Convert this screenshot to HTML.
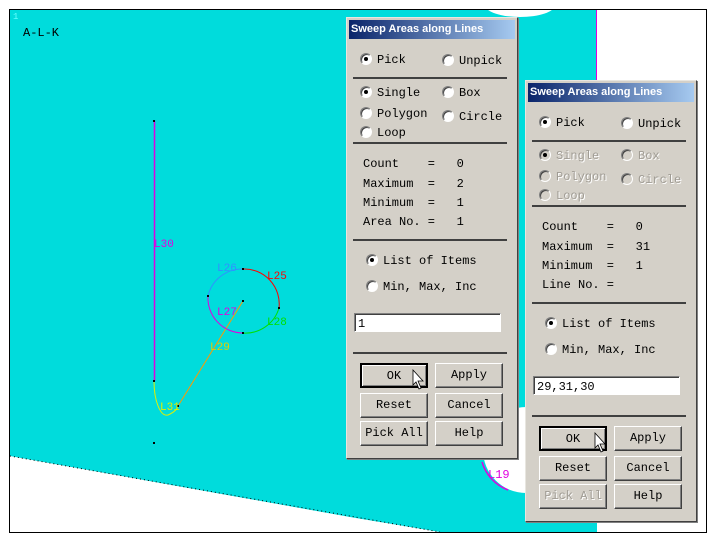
<!DOCTYPE html>
<html><head><style>
*{margin:0;padding:0;box-sizing:border-box}
body{width:720px;height:546px;background:#fff;position:relative;overflow:hidden;font-family:"Liberation Mono",monospace;font-size:12px;color:#000}
.dlg{position:absolute;width:172px;height:442px;background:#d4d0c8;border:1px solid;border-color:#e8e6e0 #404040 #404040 #e8e6e0;box-shadow:1px 1px 0 #808080}
.tb{position:absolute;left:2px;top:2px;right:2px;height:19px;background:linear-gradient(90deg,#0a246a,#a6caf0);color:#fff;font:bold 11px "Liberation Sans",sans-serif;padding:3px 0 0 2px}
.a{position:absolute;white-space:pre;line-height:12px}
.r{position:absolute;width:12px;height:12px;border-radius:50%;background:#fff;border:1px solid;border-color:#808080 #fff #fff #808080;box-shadow:inset 1px 1px 0 #404040}
.r.on::after{content:"";position:absolute;left:3px;top:3px;width:4px;height:4px;border-radius:50%;background:#000}
.dis{color:#a09c94;text-shadow:1px 1px 0 #fff}
.r.dis{background:#d4d0c8}
.sep{position:absolute;left:6px;width:154px;height:2px;background:#404040}
.in{position:absolute;left:7px;width:147px;height:19px;background:#fff;border:1px solid;border-color:#808080 #fff #fff #808080;box-shadow:inset 1px 1px 0 #404040;padding:3px 0 0 3px}
.b{position:absolute;width:68px;height:25px;border:1px solid;border-color:#fff #404040 #404040 #fff;box-shadow:inset -1px -1px 0 #808080;text-align:center;line-height:22px}
.b.def{border:2px solid #000;box-shadow:inset 1px 1px 0 #fff,inset -1px -1px 0 #808080}
</style></head><body>
<svg width="720" height="546" style="position:absolute;left:0;top:0">
<rect x="9.5" y="9.5" width="697" height="523" fill="#00dcdc" stroke="#000"/>
<rect x="597" y="10" width="109" height="522" fill="#fff"/>
<line x1="596.5" y1="10" x2="596.5" y2="100" stroke="#e000e0"/>
<polygon points="10,456 350,517 440,532 10,532" fill="#fff"/>
<line x1="10" y1="456" x2="440" y2="532" stroke="#000" stroke-dasharray="1,3"/>
<ellipse cx="520" cy="5" rx="35" ry="12" fill="#fff"/>
<circle cx="526" cy="450" r="43" fill="#fff"/>
<path d="M482,462 A43,43 0 0 0 508,490" fill="none" stroke="#e000e0" stroke-width="1.5"/>
<text x="488" y="478" fill="#e000e0" font-family="Liberation Mono" font-size="12">L19</text>
<rect x="9.5" y="9.5" width="697" height="523" fill="none" stroke="#000"/>
<text x="13" y="19" fill="#6ff" font-size="9">1</text>
<text x="23" y="36" font-family="Liberation Mono" font-size="12">A-L-K</text>
<line x1="154.5" y1="121" x2="154.5" y2="381" stroke="#e000e0" stroke-width="1.5"/>
<path d="M154,381 C154,400 160,417 168,415 C175,412 178,408 178,405" fill="none" stroke="#e0f000"/>
<line x1="178" y1="406" x2="243" y2="301" stroke="#ff9900"/>
<path d="M243,269 A35,35 0 0 1 279,308" fill="none" stroke="#ff0000"/>
<path d="M279,308 A35,35 0 0 1 243,333" fill="none" stroke="#00e000"/>
<path d="M243,333 A35,35 0 0 1 208,296" fill="none" stroke="#e000e0"/>
<path d="M208,296 A35,35 0 0 1 243,269" fill="none" stroke="#3090ff"/>
<g fill="#000"><rect x="153" y="120" width="2" height="2"/><rect x="153" y="380" width="2" height="2"/><rect x="153" y="442" width="2" height="2"/><rect x="177" y="405" width="2" height="2"/><rect x="242" y="300" width="2" height="2"/><rect x="242" y="268" width="2" height="2"/><rect x="278" y="307" width="2" height="2"/><rect x="242" y="332" width="2" height="2"/><rect x="207" y="295" width="2" height="2"/></g>
<g font-family="Liberation Mono" font-size="11">
<text x="154" y="247" fill="#e000e0">L30</text>
<text x="217" y="271" fill="#3090ff">L26</text>
<text x="267" y="279" fill="#ff0000">L25</text>
<text x="217" y="315" fill="#e000e0">L27</text>
<text x="267" y="325" fill="#00e000">L28</text>
<text x="210" y="350" fill="#e0d000">L29</text>
<text x="160" y="410" fill="#e0f000">L31</text>
</g>
</svg>

<div class="dlg" style="left:346px;top:17px">
<div class="tb">Sweep Areas along Lines</div>
<div class="r on" style="left:13px;top:35px"></div><div class="a" style="left:30px;top:36px">Pick</div>
<div class="r" style="left:95px;top:36px"></div><div class="a" style="left:112px;top:37px">Unpick</div>
<div class="sep" style="top:59px"></div>
<div class="r on" style="left:13px;top:68px"></div><div class="a" style="left:30px;top:69px">Single</div>
<div class="r" style="left:95px;top:68px"></div><div class="a" style="left:112px;top:69px">Box</div>
<div class="r" style="left:13px;top:89px"></div><div class="a" style="left:30px;top:90px">Polygon</div>
<div class="r" style="left:95px;top:92px"></div><div class="a" style="left:112px;top:93px">Circle</div>
<div class="r" style="left:13px;top:108px"></div><div class="a" style="left:30px;top:109px">Loop</div>
<div class="sep" style="top:124px"></div>
<div class="a" style="left:16px;top:140px">Count    =   0</div>
<div class="a" style="left:16px;top:160px">Maximum  =   2</div>
<div class="a" style="left:16px;top:179px">Minimum  =   1</div>
<div class="a" style="left:16px;top:198px">Area No. =   1</div>
<div class="sep" style="top:221px"></div>
<div class="r on" style="left:19px;top:236px"></div><div class="a" style="left:36px;top:237px">List of Items</div>
<div class="r" style="left:19px;top:262px"></div><div class="a" style="left:36px;top:263px">Min, Max, Inc</div>
<div class="in" style="top:295px">1</div>
<div class="sep" style="top:334px"></div>
<div class="b def" style="left:13px;top:345px">OK</div>
<div class="b" style="left:88px;top:345px">Apply</div>
<div class="b" style="left:13px;top:375px">Reset</div>
<div class="b" style="left:88px;top:375px">Cancel</div>
<div class="b" style="left:13px;top:403px">Pick All</div>
<div class="b" style="left:88px;top:403px">Help</div>
</div>

<div class="dlg" style="left:525px;top:80px">
<div class="tb">Sweep Areas along Lines</div>
<div class="r on" style="left:13px;top:35px"></div><div class="a" style="left:30px;top:36px">Pick</div>
<div class="r" style="left:95px;top:36px"></div><div class="a" style="left:112px;top:37px">Unpick</div>
<div class="sep" style="top:59px"></div>
<div class="r on dis" style="left:13px;top:68px"></div><div class="a dis" style="left:30px;top:69px">Single</div>
<div class="r dis" style="left:95px;top:68px"></div><div class="a dis" style="left:112px;top:69px">Box</div>
<div class="r dis" style="left:13px;top:89px"></div><div class="a dis" style="left:30px;top:90px">Polygon</div>
<div class="r dis" style="left:95px;top:92px"></div><div class="a dis" style="left:112px;top:93px">Circle</div>
<div class="r dis" style="left:13px;top:108px"></div><div class="a dis" style="left:30px;top:109px">Loop</div>
<div class="sep" style="top:124px"></div>
<div class="a" style="left:16px;top:140px">Count    =   0</div>
<div class="a" style="left:16px;top:160px">Maximum  =   31</div>
<div class="a" style="left:16px;top:179px">Minimum  =   1</div>
<div class="a" style="left:16px;top:198px">Line No. =</div>
<div class="sep" style="top:221px"></div>
<div class="r on" style="left:19px;top:236px"></div><div class="a" style="left:36px;top:237px">List of Items</div>
<div class="r" style="left:19px;top:262px"></div><div class="a" style="left:36px;top:263px">Min, Max, Inc</div>
<div class="in" style="top:295px">29,31,30</div>
<div class="sep" style="top:334px"></div>
<div class="b def" style="left:13px;top:345px">OK</div>
<div class="b" style="left:88px;top:345px">Apply</div>
<div class="b" style="left:13px;top:375px">Reset</div>
<div class="b" style="left:88px;top:375px">Cancel</div>
<div class="b dis" style="left:13px;top:403px">Pick All</div>
<div class="b" style="left:88px;top:403px">Help</div>
</div>

<svg width="720" height="546" style="position:absolute;left:0;top:0">
<path d="M413,370 L413,385 L416,382 L419,389 L421,388 L418,381 L423,381 Z" fill="#fff" stroke="#000" stroke-width="0.8"/>
<path d="M595,433 L595,448 L598,445 L601,452 L603,451 L600,444 L605,444 Z" fill="#fff" stroke="#000" stroke-width="0.8"/>
</svg>
</body></html>
